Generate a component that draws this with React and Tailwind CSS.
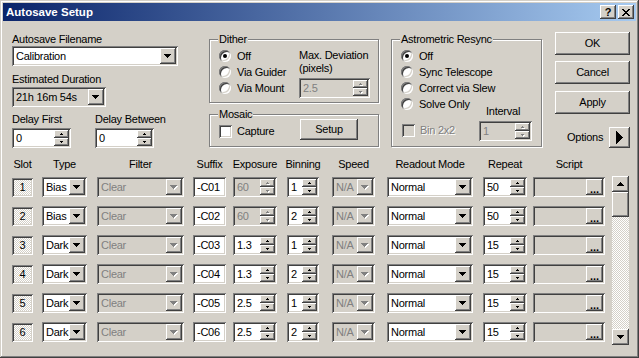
// App.jsx

const SUNKEN =
  "shadow-[inset_1px_1px_#808080,inset_-1px_-1px_#ffffff,inset_2px_2px_#404040,inset_-2px_-2px_#d4d0c8]";
const RAISED =
  "shadow-[inset_-1px_-1px_#404040,inset_1px_1px_#ffffff,inset_-2px_-2px_#808080,inset_2px_2px_#d4d0c8]";
const CHECKER =
  "bg-[image:repeating-conic-gradient(#ffffff_0%_25%,#d4d0c8_0%_50%)] bg-[length:2px_2px]";
const DIS_TEXT = "text-[#808080] [text-shadow:1px_1px_#ffffff]";

function Arrow({ d, w, h, disabled }) {
  return (
    <svg width={w + 1} height={h + 1} viewBox={`0 0 ${w + 1} ${h + 1}`} className="block" shapeRendering="crispEdges">
      {disabled && <path d={d} fill="#ffffff" transform="translate(1 1)" />}
      <path d={d} fill={disabled ? "#808080" : "#000000"} />
    </svg>
  );
}

const DOWN7 = "M0 0h7v1H0zM1 1h5v1H1zM2 2h3v1H2zM3 3h1v1H3z";
const UP7 = "M3 0h1v1H3zM2 1h3v1H2zM1 2h5v1H1zM0 3h7v1H0z";
const UP3 = "M1 0h1v1H1zM0 1h3v1H0z";
const DOWN3 = "M0 0h3v1H0zM1 1h1v1H1z";

function Btn({ children, className = "" }) {
  return (
    <div className={`flex shrink-0 items-center justify-center bg-[#d4d0c8] ${RAISED} ${className}`}>
      {children}
    </div>
  );
}

function Combo({ value, className = "", disabled, readOnly }) {
  const bg = disabled || readOnly ? "bg-[#d4d0c8]" : "bg-white";
  return (
    <div className={`flex h-[20px] shrink-0 items-center p-[2px] ${bg} ${SUNKEN} ${className}`}>
      <span className={`flex-1 truncate pl-[2px] ${disabled ? "text-[#808080]" : ""}`}>{value}</span>
      <Btn className="h-[16px] w-[16px]">
        <Arrow d={DOWN7} w={7} h={4} disabled={disabled} />
      </Btn>
    </div>
  );
}

function Spin({ value, className = "", disabled }) {
  return (
    <div
      className={`flex h-[20px] shrink-0 items-center p-[2px] ${disabled ? "bg-[#d4d0c8]" : "bg-white"} ${SUNKEN} ${className}`}
    >
      <span className={`flex-1 truncate pl-[2px] ${disabled ? "text-[#808080]" : ""}`}>{value}</span>
      <div className="flex h-full w-[15px] flex-col">
        <Btn className="h-1/2 w-full">
          <Arrow d={UP3} w={3} h={2} disabled={disabled} />
        </Btn>
        <Btn className="h-1/2 w-full">
          <Arrow d={DOWN3} w={3} h={2} disabled={disabled} />
        </Btn>
      </div>
    </div>
  );
}

function TextBox({ value, className = "" }) {
  return (
    <div className={`flex h-[20px] shrink-0 items-center bg-white p-[2px] pl-[4px] ${SUNKEN} ${className}`}>
      {value}
    </div>
  );
}

function Radio({ checked, label }) {
  return (
    <div className="flex h-[16px] items-center whitespace-nowrap">
      <span className={`flex h-[12px] w-[12px] shrink-0 items-center justify-center rounded-full bg-white ${SUNKEN}`}>
        {checked && <span className="h-[4px] w-[4px] rounded-full bg-black" />}
      </span>
      <span className="ml-[6px]">{label}</span>
    </div>
  );
}

function Check({ label, disabled, className = "" }) {
  return (
    <div className={`flex items-center whitespace-nowrap ${className}`}>
      <span className={`h-[13px] w-[13px] shrink-0 ${disabled ? "bg-[#d4d0c8]" : "bg-white"} ${SUNKEN}`} />
      <span className={`ml-[5px] ${disabled ? DIS_TEXT : ""}`}>{label}</span>
    </div>
  );
}

function Group({ title, className = "", children }) {
  return (
    <div className={`relative border border-[#808080] shadow-[inset_1px_1px_#ffffff,1px_1px_#ffffff] ${className}`}>
      <span className="absolute left-[8px] top-[-7px] bg-[#d4d0c8] px-[1px] whitespace-nowrap">{title}</span>
      {children}
    </div>
  );
}

const rows = [
  { slot: 1, type: "Bias", suffix: "-C01", exp: "60", expOff: true, bin: "1", rep: "50" },
  { slot: 2, type: "Bias", suffix: "-C02", exp: "60", expOff: true, bin: "2", rep: "50" },
  { slot: 3, type: "Dark", suffix: "-C03", exp: "1.3", bin: "1", rep: "15" },
  { slot: 4, type: "Dark", suffix: "-C04", exp: "1.3", bin: "2", rep: "15" },
  { slot: 5, type: "Dark", suffix: "-C05", exp: "2.5", bin: "1", rep: "15" },
  { slot: 6, type: "Dark", suffix: "-C06", exp: "2.5", bin: "2", rep: "15" },
];

const headers = [
  ["Slot", "w-[21px]"],
  ["Type", "ml-[9px] w-[45px]"],
  ["Filter", "ml-[10px] w-[87px]"],
  ["Suffix", "ml-[9px] w-[33px]"],
  ["Exposure", "ml-[7px] w-[44px]"],
  ["Binning", "ml-[10px] w-[32px]"],
  ["Speed", "ml-[13px] w-[43px]"],
  ["Readout Mode", "ml-[12px] w-[86px]"],
  ["Repeat", "ml-[10px] w-[44px]"],
  ["Script", "ml-[6px] w-[72px]"],
];

export default function App() {
  return (
    <div className="h-[358px] w-[639px] overflow-hidden bg-[#d4d0c8] p-[3px] font-['Liberation_Sans',Arial,sans-serif] text-[11px] leading-[13px] tracking-[-0.25px] text-black shadow-[inset_-1px_-1px_#404040,inset_1px_1px_#d4d0c8,inset_-2px_-2px_#808080,inset_2px_2px_#ffffff]">
      {/* Title bar */}
      <div className="flex h-[18px] items-center justify-between bg-[linear-gradient(to_right,#0a246a,#a6caf0)] pl-[3px] pr-[2px]">
        <span className="text-[11.5px] font-bold tracking-normal text-white">Autosave Setup</span>
        <div className="flex gap-[2px]">
          <Btn className="h-[14px] w-[16px] text-[11px] font-bold leading-none">?</Btn>
          <Btn className="h-[14px] w-[16px]">
            <svg width="8" height="7" viewBox="0 0 8 7" shapeRendering="crispEdges">
              <path d="M0 0h2v1H0zM6 0h2v1H6zM1 1h2v1H1zM5 1h2v1H5zM2 2h4v1H2zM3 3h2v1H3zM2 4h4v1H2zM1 5h2v1H1zM5 5h2v1H5zM0 6h2v1H0zM6 6h2v1H6z" />
            </svg>
          </Btn>
        </div>
      </div>

      {/* Top settings */}
      <div className="flex h-[137px] items-start pl-[9px]">
        <div className="w-[166px] shrink-0 pt-[12px]">
          <div>Autosave Filename</div>
          <Combo value="Calibration" className="w-[166px]" />
          <div className="mt-[7px]">Estimated Duration</div>
          <Combo value="21h 16m 54s" readOnly className="mt-[1px] w-[94px]" />
          <div className="mt-[6px] flex">
            <div className="w-[83px]">
              <div>Delay First</div>
              <Spin value="0" className="mt-[2px] w-[59px]" />
            </div>
            <div>
              <div className="whitespace-nowrap">Delay Between</div>
              <Spin value="0" className="mt-[2px] w-[59px]" />
            </div>
          </div>
        </div>

        <div className="ml-[31px] w-[170px] shrink-0 pt-[18px]">
          <Group title="Dither" className="h-[64px]">
            <div className="flex pl-[9px] pt-[8px]">
              <div className="w-[80px] shrink-0">
                <Radio checked label="Off" />
                <Radio label="Via Guider" />
                <Radio label="Via Mount" />
              </div>
              <div className="pt-[1px]">
                <div className="whitespace-nowrap">Max. Deviation</div>
                <div>(pixels)</div>
                <Spin value="2.5" disabled className="mt-[3px] w-[71px]" />
              </div>
            </div>
          </Group>
          <Group title="Mosaic" className="mt-[11px] h-[33px]">
            <div className="flex items-start pl-[9px] pt-[4px]">
              <Check label="Capture" className="mt-[6px] w-[81px]" />
              <Btn className="h-[21px] w-[58px]">Setup</Btn>
            </div>
          </Group>
        </div>

        <div className="ml-[12px] w-[151px] shrink-0 pt-[18px]">
          <Group title="Astrometric Resync" className="h-[108px]">
            <div className="pl-[9px] pt-[8px]">
              <Radio checked label="Off" />
              <Radio label="Sync Telescope" />
              <Radio label="Correct via Slew" />
              <Radio label="Solve Only" />
              <div className="flex items-start">
                <Check disabled label="Bin 2x2" className="ml-[1px] mt-[12px]" />
                <div className="ml-auto mr-[9px] mt-[-7px] w-[53px]">
                  <div className="pl-[7px]">Interval</div>
                  <Spin value="1" disabled className="mt-[3px] w-[53px]" />
                </div>
              </div>
            </div>
          </Group>
        </div>

        <div className="ml-[13px] w-[75px] shrink-0 pt-[11px]">
          <Btn className="h-[23px] w-[75px]">OK</Btn>
          <Btn className="mt-[6px] h-[23px] w-[75px]">Cancel</Btn>
          <Btn className="mt-[7px] h-[23px] w-[75px]">Apply</Btn>
          <div className="mt-[13px] flex w-[80px] items-center pl-[12px]">
            <span>Options</span>
            <Btn className="ml-[6px] h-[21px] w-[21px]">
              <svg width="7" height="13" viewBox="0 0 7 13" shapeRendering="crispEdges">
                <path d="M0 0L7 6.5L0 13z" />
              </svg>
            </Btn>
          </div>
        </div>
      </div>

      {/* Sequence table */}
      <div className="flex pl-[9px]">
        {headers.map(([label, cls]) => (
          <div key={label} className={`flex shrink-0 justify-center whitespace-nowrap ${cls}`}>
            {label}
          </div>
        ))}
      </div>
      <div className="flex items-start">
        <div className="flex flex-col gap-[9px] pl-[9px] pt-[6px]">
          {rows.map((r) => (
            <div key={r.slot} className="flex h-[20px] items-center">
              <div className={`flex h-[19px] w-[21px] shrink-0 items-center justify-center ${CHECKER} ${SUNKEN}`}>
                {r.slot}
              </div>
              <Combo value={r.type} className="ml-[9px] w-[45px]" />
              <Combo value="Clear" disabled className="ml-[10px] w-[87px]" />
              <TextBox value={r.suffix} className="ml-[9px] w-[33px]" />
              <Spin value={r.exp} disabled={r.expOff} className="ml-[7px] w-[44px]" />
              <Spin value={r.bin} className="ml-[10px] w-[32px]" />
              <Combo value="N/A" disabled className="ml-[13px] w-[43px]" />
              <Combo value="Normal" className="ml-[12px] w-[86px]" />
              <Spin value={r.rep} className="ml-[10px] w-[44px]" />
              <div className={`ml-[6px] flex h-[20px] w-[72px] shrink-0 items-center justify-end bg-[#d4d0c8] p-[2px] ${SUNKEN}`}>
                <Btn className="h-[16px] w-[17px] items-end pb-[2px] font-bold leading-[8px] tracking-normal">...</Btn>
              </div>
            </div>
          ))}
        </div>
        <div className={`ml-[7px] mt-[5px] flex h-[169px] w-[17px] shrink-0 flex-col ${CHECKER}`}>
          <Btn className="h-[16px] w-[17px]">
            <Arrow d={UP7} w={7} h={4} />
          </Btn>
          <Btn className="h-[25px] w-[17px]" />
          <div className="flex-1" />
          <Btn className="h-[16px] w-[17px]">
            <Arrow d={DOWN7} w={7} h={4} />
          </Btn>
        </div>
      </div>
    </div>
  );
}
